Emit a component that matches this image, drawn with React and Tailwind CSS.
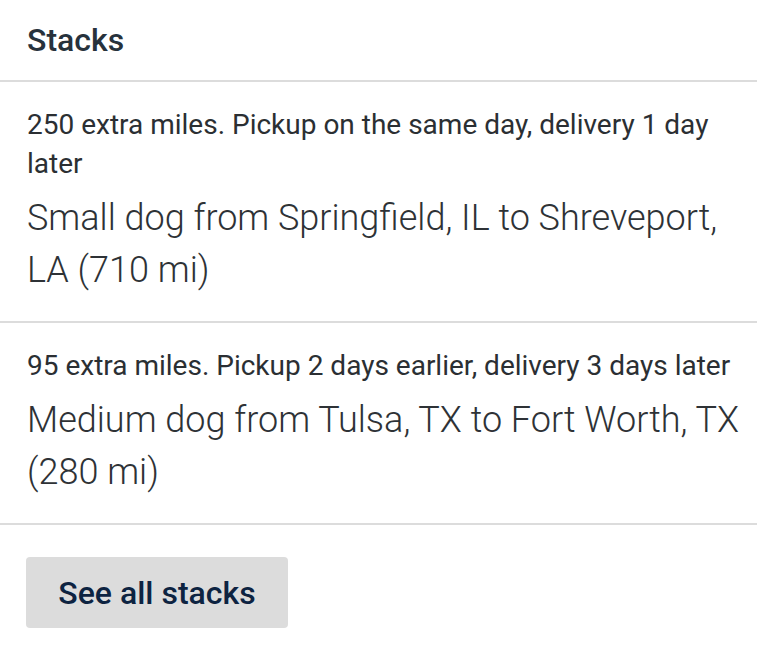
const stacks = [
  {
    note: '250 extra miles. Pickup on the same day, delivery 1 day later',
    route: 'Small dog from Springfield, IL to Shreveport, LA (710 mi)',
  },
  {
    note: '95 extra miles. Pickup 2 days earlier, delivery 3 days later',
    route: 'Medium dog from Tulsa, TX to Fort Worth, TX (280 mi)',
  },
];

function StackItem({ note, route }) {
  return (
    <div className="border-b-2 border-[#dcdcdc] pl-[27px] pr-[4px] pt-[23px] pb-[25px]">
      <p className="text-[28px] leading-[39px] text-[#2b2f33]">{note}</p>
      <p className="mt-[9px] text-[36px] leading-[52px] font-light text-[#2e3236]">{route}</p>
    </div>
  );
}

export default function App() {
  return (
    <div className="w-[757px] h-[646px] bg-white font-['Roboto',sans-serif]">
      <div className="border-b-2 border-[#dcdcdc] px-[27px] pt-[20px] pb-[20px]">
        <h2 className="text-[32px] leading-[40px] font-medium text-[#27323c]">Stacks</h2>
      </div>
      {stacks.map((s, i) => (
        <StackItem key={i} note={s.note} route={s.route} />
      ))}
      <div className="px-[26px] pt-[32px]">
        <button className="w-[262px] h-[71px] rounded-[4px] bg-[#dcdcdc] text-[32px] font-medium text-[#0d2341]">
          See all stacks
        </button>
      </div>
    </div>
  );
}
